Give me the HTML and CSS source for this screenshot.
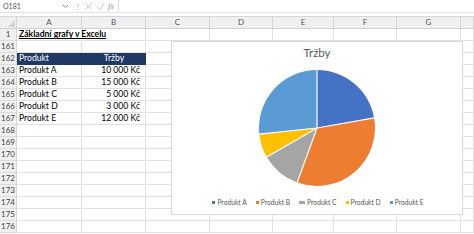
FILE: index.html
```html
<!DOCTYPE html>
<html lang="cs">
<head>
<meta charset="utf-8">
<title>Základní grafy v Excelu</title>
<link rel="stylesheet" href="styles.css">
</head>
<body>
<div class="formula-bar">
  <div class="namebox">O181</div>
  <svg class="caret" width="7" height="5" viewBox="0 0 7 5"><path d="M1 1 L3.5 3.5 L6 1" fill="none" stroke="#777" stroke-width="0.9"/></svg>
  <span class="dots">⋮</span>
  <svg class="ficon" width="9" height="9" viewBox="0 0 9 9"><path d="M1.5 1.5 L7.5 7.5 M7.5 1.5 L1.5 7.5" stroke="#c4c4c4" stroke-width="0.9"/></svg>
  <svg class="ficon" width="9" height="9" viewBox="0 0 9 9"><path d="M1 5 L3.5 7.5 L8 1.5" fill="none" stroke="#c4c4c4" stroke-width="0.9"/></svg>
  <span class="fx">fx</span>
  <div class="finput"></div>
</div>
<div class="gap"></div>
<div class="sheet">
  <div class="grid">
    <div class="hd corner"><span class="tri"></span></div><div class="hd">A</div><div class="hd">B</div><div class="hd">C</div><div class="hd">D</div><div class="hd">E</div><div class="hd">F</div><div class="hd">G</div><div class="hd"></div>

    <div class="rh">1</div><div class="c title-cell"><span class="title">Základní grafy v Excelu</span></div><div class="c"></div><div class="c"></div><div class="c"></div><div class="c"></div><div class="c"></div><div class="c"></div><div class="c"></div>
    <div class="rh">161</div><div class="c"></div><div class="c"></div><div class="c"></div><div class="c"></div><div class="c"></div><div class="c"></div><div class="c"></div><div class="c"></div>
    <div class="rh">162</div><div class="c th">Produkt</div><div class="c th ctr">Tržby</div><div class="c"></div><div class="c"></div><div class="c"></div><div class="c"></div><div class="c"></div><div class="c"></div>
    <div class="rh">163</div><div class="c">Produkt A</div><div class="c num">10 000 Kč</div><div class="c"></div><div class="c"></div><div class="c"></div><div class="c"></div><div class="c"></div><div class="c"></div>
    <div class="rh">164</div><div class="c">Produkt B</div><div class="c num">15 000 Kč</div><div class="c"></div><div class="c"></div><div class="c"></div><div class="c"></div><div class="c"></div><div class="c"></div>
    <div class="rh">165</div><div class="c">Produkt C</div><div class="c num">5 000 Kč</div><div class="c"></div><div class="c"></div><div class="c"></div><div class="c"></div><div class="c"></div><div class="c"></div>
    <div class="rh">166</div><div class="c">Produkt D</div><div class="c num">3 000 Kč</div><div class="c"></div><div class="c"></div><div class="c"></div><div class="c"></div><div class="c"></div><div class="c"></div>
    <div class="rh">167</div><div class="c">Produkt E</div><div class="c num">12 000 Kč</div><div class="c"></div><div class="c"></div><div class="c"></div><div class="c"></div><div class="c"></div><div class="c"></div>
    <div class="rh">168</div><div class="c"></div><div class="c"></div><div class="c"></div><div class="c"></div><div class="c"></div><div class="c"></div><div class="c"></div><div class="c"></div>
    <div class="rh">169</div><div class="c"></div><div class="c"></div><div class="c"></div><div class="c"></div><div class="c"></div><div class="c"></div><div class="c"></div><div class="c"></div>
    <div class="rh">170</div><div class="c"></div><div class="c"></div><div class="c"></div><div class="c"></div><div class="c"></div><div class="c"></div><div class="c"></div><div class="c"></div>
    <div class="rh">171</div><div class="c"></div><div class="c"></div><div class="c"></div><div class="c"></div><div class="c"></div><div class="c"></div><div class="c"></div><div class="c"></div>
    <div class="rh">172</div><div class="c"></div><div class="c"></div><div class="c"></div><div class="c"></div><div class="c"></div><div class="c"></div><div class="c"></div><div class="c"></div>
    <div class="rh">173</div><div class="c"></div><div class="c"></div><div class="c"></div><div class="c"></div><div class="c"></div><div class="c"></div><div class="c"></div><div class="c"></div>
    <div class="rh">174</div><div class="c"></div><div class="c"></div><div class="c"></div><div class="c"></div><div class="c"></div><div class="c"></div><div class="c"></div><div class="c"></div>
    <div class="rh">175</div><div class="c"></div><div class="c"></div><div class="c"></div><div class="c"></div><div class="c"></div><div class="c"></div><div class="c"></div><div class="c"></div>
    <div class="rh">176</div><div class="c"></div><div class="c"></div><div class="c"></div><div class="c"></div><div class="c"></div><div class="c"></div><div class="c"></div><div class="c"></div>
  </div>

  <div class="chart">
    <div class="chart-title">Tržby</div>
    <svg class="pie" width="118" height="118" viewBox="-59 -59 118 118">
      <path d="M0 0 L0 -58 A58 58 0 0 1 57.12 -10.07 Z" fill="#4472c4"/>
      <path d="M0 0 L57.12 -10.07 A58 58 0 0 1 -19.84 54.5 Z" fill="#ed7d31"/>
      <path d="M0 0 L-19.84 54.5 A58 58 0 0 1 -50.23 29 Z" fill="#a5a5a5"/>
      <path d="M0 0 L-50.23 29 A58 58 0 0 1 -57.68 6.06 Z" fill="#ffc000"/>
      <path d="M0 0 L-57.68 6.06 A58 58 0 0 1 0 -58 Z" fill="#5b9bd5"/>
      <g stroke="#fff" stroke-width="1.2" fill="none">
        <path d="M0 0 L0 -58 M0 0 L57.12 -10.07 M0 0 L-19.84 54.5 M0 0 L-50.23 29 M0 0 L-57.68 6.06"/>
      </g>
    </svg>
    <div class="legend">
      <span class="li"><i class="sw a"></i>Produkt A</span>
      <span class="li"><i class="sw b"></i>Produkt B</span>
      <span class="li"><i class="sw c"></i>Produkt C</span>
      <span class="li"><i class="sw d"></i>Produkt D</span>
      <span class="li"><i class="sw e"></i>Produkt E</span>
    </div>
  </div>
</div>
</body>
</html>
```
FILE: styles.css
```css
html, body {
  margin: 0;
  padding: 0;
  background: #fff;
}
body {
  width: 474px;
  height: 234px;
  overflow: hidden;
  font-family: Lato, "Open Sans", sans-serif;
  color: #000;
}

.formula-bar {
  display: flex;
  align-items: center;
  height: 13px;
  box-sizing: border-box;
  border-bottom: 1px solid #e3e3e3;
}
.namebox {
  width: 62px;
  padding-left: 3px;
  box-sizing: border-box;
  font-size: 7px;
  color: #555;
  line-height: 12px;
}
.caret {
  display: block;
  margin-left: 0;
}
.dots {
  font-size: 8px;
  color: #9a9a9a;
  margin-left: 5px;
  width: 7px;
  line-height: 12px;
}
.ficon {
  display: block;
  margin-left: 3px;
}
.fx {
  font-family: "Liberation Serif", serif;
  font-style: italic;
  font-size: 8px;
  color: #8a8a8a;
  margin-left: 3px;
  width: 8px;
}
.finput {
  flex: 1;
  align-self: stretch;
  border-left: 1px solid #dcdcdc;
  margin-left: 2px;
}

.gap {
  height: 3px;
}

.sheet {
  position: relative;
}
.grid {
  display: grid;
  grid-template-columns: 17px 65px 64px 64px 63px 61px 63px 64px 1fr;
  grid-template-rows: 13px;
  grid-auto-rows: 12px;
}
.grid > div {
  box-sizing: border-box;
  border-right: 1px solid #e1e1e1;
  border-bottom: 1px solid #e1e1e1;
  white-space: nowrap;
  font-size: 8.6px;
  line-height: 11px;
}
.hd {
  background: #f0f0f0;
  border-top: 1px solid #d6d6d6;
  border-right-color: #d6d6d6 !important;
  border-bottom-color: #cfcfcf !important;
  text-align: center;
  color: #555;
  font-size: 8px !important;
  line-height: 11px !important;
}
.corner {
  position: relative;
}
.tri {
  position: absolute;
  right: 1px;
  bottom: 1px;
  width: 0;
  height: 0;
  border-left: 7px solid transparent;
  border-bottom: 7px solid #d2d2d2;
}
.rh {
  background: #f0f0f0;
  border-right-color: #d6d6d6 !important;
  border-bottom-color: #dcdcdc !important;
  text-align: center;
  color: #444;
  font-size: 8px !important;
}
.c {
  padding: 0 1px 0 2px;
}
.title-cell {
  overflow: visible;
  border-right-color: transparent !important;
  position: relative;
  z-index: 1;
}
.title {
  font-weight: 700;
  text-decoration: underline;
}
.th {
  background: #203864;
  color: #fff;
  border-color: #203864 !important;
}
.ctr {
  text-align: center;
}
.num {
  text-align: right;
  padding-right: 5px;
}

.chart {
  position: absolute;
  left: 171px;
  top: 25px;
  width: 292px;
  height: 174px;
  box-sizing: border-box;
  background: #fff;
  border: 1px solid #d9d9d9;
  display: flex;
  flex-direction: column;
  align-items: center;
  z-index: 2;
}
.chart-title {
  margin-top: 4px;
  font-size: 11.5px;
  line-height: 14px;
  color: #595959;
}
.pie {
  display: block;
  margin-top: 9px;
}
.legend {
  display: flex;
  gap: 9px;
  margin-top: 10px;
  margin-left: 2px;
  font-size: 6.7px;
  line-height: 10px;
  color: #595959;
}
.li {
  display: flex;
  align-items: center;
  gap: 2px;
}
.sw {
  display: block;
  width: 3px;
  height: 3px;
}
.sw.a { background: #4472c4; }
.sw.b { background: #ed7d31; }
.sw.c { background: #a5a5a5; }
.sw.d { background: #ffc000; }
.sw.e { background: #5b9bd5; }
```
